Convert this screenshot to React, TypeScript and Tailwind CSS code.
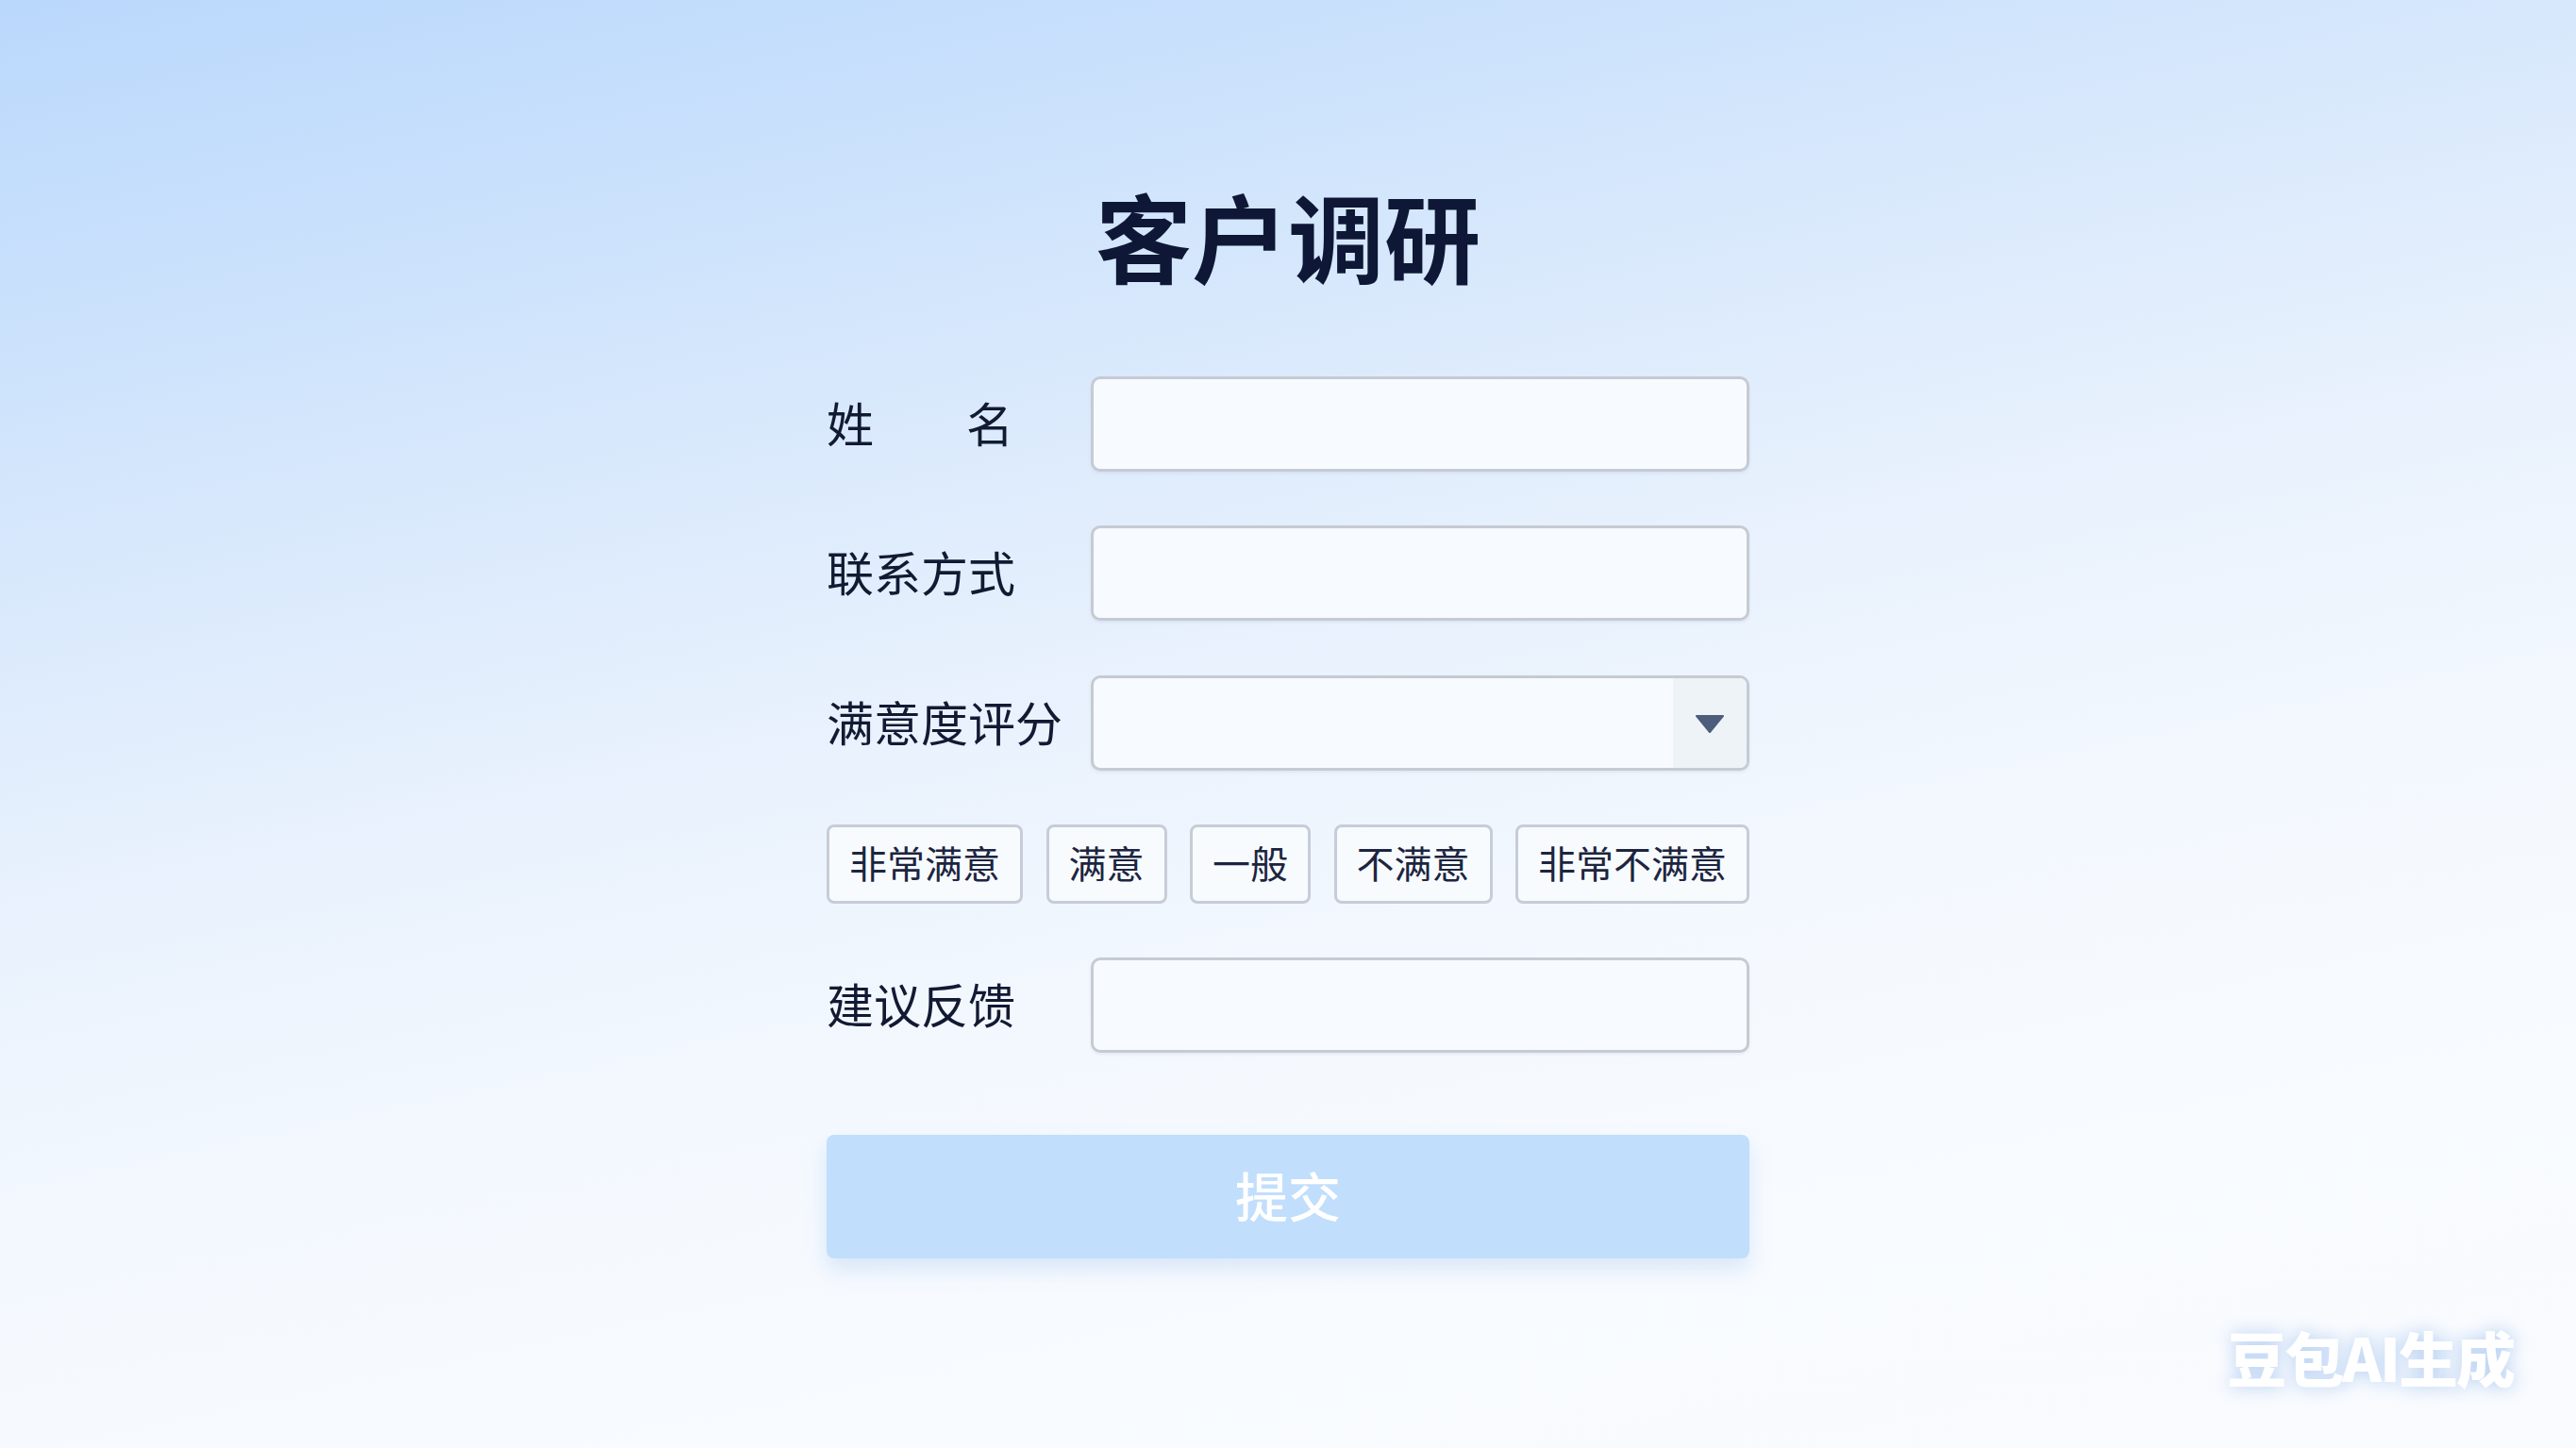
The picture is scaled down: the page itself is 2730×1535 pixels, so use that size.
import React from "react";

const font = { fontFamily: '"Noto Sans CJK SC", "Noto Sans", sans-serif' };

function Field({ label, children }: { label: React.ReactNode; children: React.ReactNode }) {
  return (
    <div className="grid grid-cols-[280px_698px] items-center">
      <div className="text-[50px] leading-none text-[#121a33] pb-[6px]">{label}</div>
      {children}
    </div>
  );
}

function TextBox() {
  return (
    <div className="h-[101px] rounded-[10px] border-[3px] border-[#c6cbd3] bg-[#f7fbff] shadow-[0_2px_3px_rgba(120,140,170,0.12)]" />
  );
}

export default function App() {
  const options = ["非常满意", "满意", "一般", "不满意", "非常不满意"];
  return (
    <div
      style={font}
      className="relative w-full h-[1535px] overflow-hidden bg-[linear-gradient(168deg,#bad8fc_0%,#c8e0fc_14%,#d9e9fc_30%,#e8f1fd_45%,#f3f8fe_62%,#f8fbff_80%,#f9fbfe_100%)]"
    >
      <div className="flex flex-col items-center pt-[197px]">
        <h1 className="text-[102px] font-bold leading-[104px] text-[#0e1836]">客户调研</h1>

        <div className="mt-[98px] w-[978px] flex flex-col">
          <Field
            label={
              <div className="flex justify-between w-[198px]">
                <span>姓</span>
                <span>名</span>
              </div>
            }
          >
            <TextBox />
          </Field>

          <div className="mt-[57px]">
            <Field label="联系方式">
              <TextBox />
            </Field>
          </div>

          <div className="mt-[58px]">
            <Field label="满意度评分">
              <div className="h-[101px] rounded-[10px] border-[3px] border-[#c6cbd3] bg-[#f7fbff] shadow-[0_2px_3px_rgba(120,140,170,0.12)] flex overflow-hidden">
                <div className="flex-1" />
                <div className="w-[78px] bg-[#eef3f8] flex items-center justify-center">
                  <svg width="32" height="20" viewBox="0 0 32 20">
                    <path d="M2 2 L30 2 L16 19 Z" fill="#4d5d7c" stroke="#4d5d7c" strokeWidth="2" strokeLinejoin="round" />
                  </svg>
                </div>
              </div>
            </Field>
          </div>

          <div className="mt-[57px] flex justify-between">
            {options.map((o) => (
              <div
                key={o}
                className="h-[84px] px-[21px] pb-[4px] flex items-center justify-center rounded-[8px] border-[3px] border-[#c6cdd8] bg-[#f8fbfe] text-[40px] leading-none text-[#1c2540]"
              >
                {o}
              </div>
            ))}
          </div>

          <div className="mt-[57px]">
            <Field label="建议反馈">
              <TextBox />
            </Field>
          </div>

          <div className="mt-[87px] h-[131px] rounded-[8px] bg-[#c1defc] shadow-[0_12px_22px_rgba(160,195,235,0.35)] flex items-center justify-center pb-[6px]">
            <span className="text-[56px] leading-none text-white font-medium">提交</span>
          </div>
        </div>
      </div>

      <div className="absolute right-[66px] bottom-[66px] text-[63px] font-black leading-none text-white tracking-[-2px] [text-shadow:0_0_18px_rgba(170,200,240,0.9)]">
        豆包AI生成
      </div>
    </div>
  );
}
